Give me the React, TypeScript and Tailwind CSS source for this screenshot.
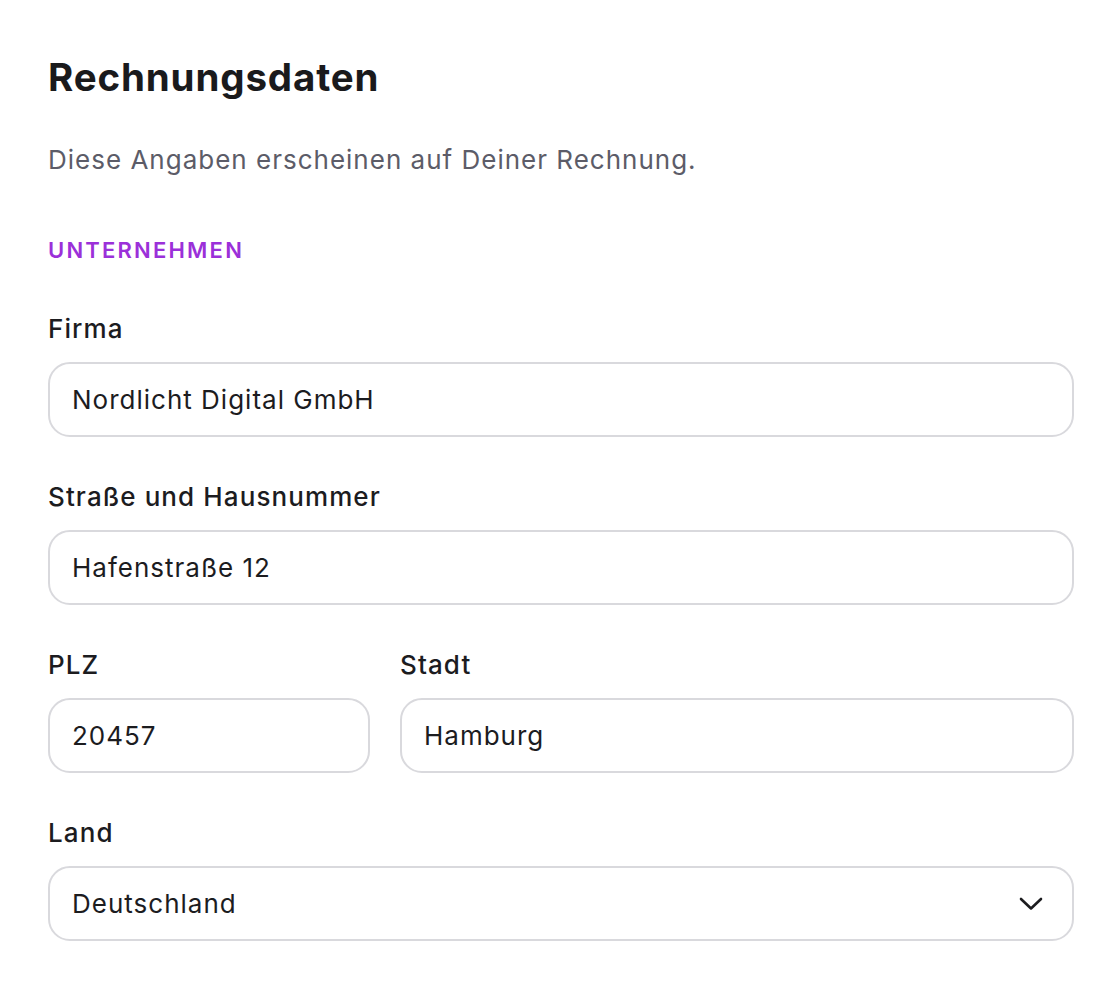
import React from "react";

function Field({ label, value }: { label: string; value: string }) {
  return (
    <div className="flex flex-col">
      <label className="text-[26px] leading-[36px] font-medium tracking-[1.1px] text-[#1c1c1f] mb-[15px]">{label}</label>
      <div className="h-[75px] rounded-[22px] border-2 border-[#d9d9dd] bg-white flex items-center px-[22px] text-[26px] tracking-[1px] text-[#1c1c1f]">
        {value}
      </div>
    </div>
  );
}

export default function App() {
  return (
    <div className="min-h-screen bg-white px-[48px] pt-[52px]" style={{ fontFamily: "Inter, 'Noto Sans', sans-serif" }}>
      <h1 className="text-[38.5px] leading-[50px] font-bold tracking-[0.85px] text-[#1a1a1c]">Rechnungsdaten</h1>
      <p className="mt-[40px] text-[26px] leading-[36px] tracking-[1px] text-[#5c5c68]">Diese Angaben erscheinen auf Deiner Rechnung.</p>
      <div className="mt-[57px] text-[22px] leading-[30px] font-semibold tracking-[2.2px] text-[#9b30d9]">UNTERNEHMEN</div>
      <div className="mt-[46px] w-[1026px] flex flex-col gap-[42px]">
        <Field label="Firma" value="Nordlicht Digital GmbH" />
        <Field label="Straße und Hausnummer" value="Hafenstraße 12" />
        <div className="grid grid-cols-3 gap-[30px]">
          <div className="col-span-1">
            <Field label="PLZ" value="20457" />
          </div>
          <div className="col-span-2">
            <Field label="Stadt" value="Hamburg" />
          </div>
        </div>
        <div className="flex flex-col">
          <label className="text-[26px] leading-[36px] font-medium tracking-[1.1px] text-[#1c1c1f] mb-[15px]">Land</label>
          <div className="h-[75px] rounded-[22px] border-2 border-[#d9d9dd] bg-white flex items-center justify-between pl-[22px] pr-[29px] text-[26px] tracking-[1px] text-[#1c1c1f]">
            <span>Deutschland</span>
            <svg width="24" height="14" viewBox="0 0 24 14" fill="none">
              <polyline points="2,2 12,11.5 22,2" stroke="#1c1c1f" strokeWidth="2.6" strokeLinecap="round" strokeLinejoin="round" />
            </svg>
          </div>
        </div>
      </div>
    </div>
  );
}
